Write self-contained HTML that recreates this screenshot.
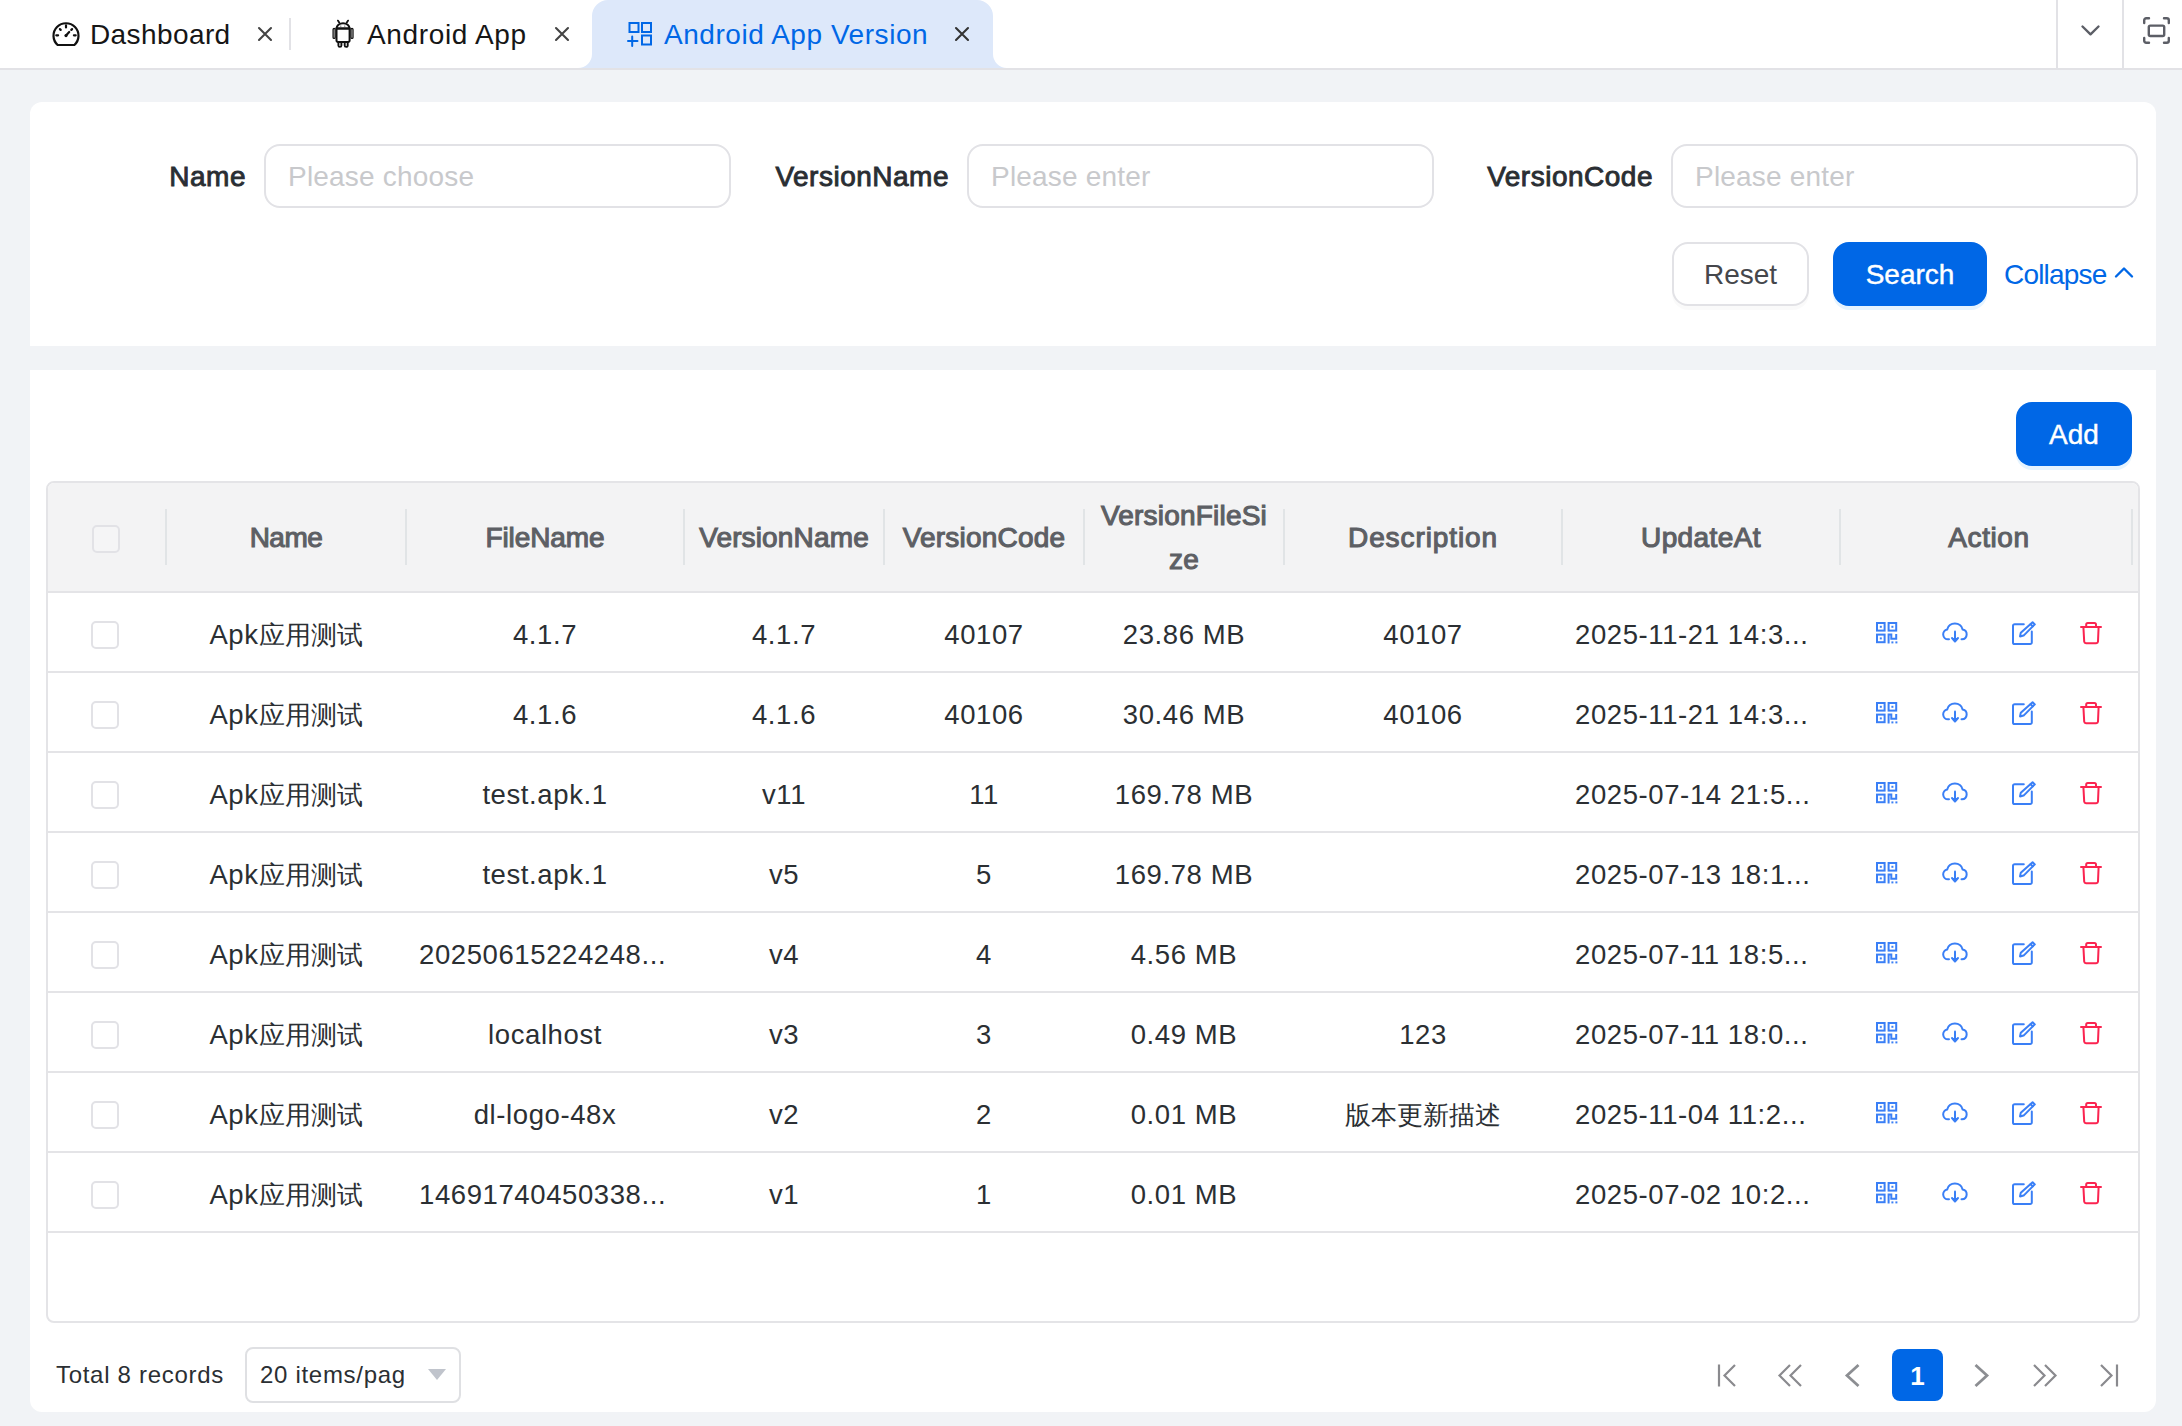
<!DOCTYPE html>
<html><head><meta charset="utf-8">
<style>
*{box-sizing:border-box;margin:0;padding:0}
html,body{width:2182px;height:1426px;overflow:hidden;background:#f1f3f6;font-family:"Liberation Sans",sans-serif;color:#2b2f33}
.t{position:absolute;white-space:nowrap}
.r{position:absolute}
svg{position:absolute;overflow:visible}
.b{font-weight:bold}
</style></head><body>

<div class="r" style="left:0;top:0;width:2182px;height:68px;background:#fff"></div>
<div class="r" style="left:0;top:68px;width:2182px;height:2px;background:#e2e2e6"></div>
<svg style="left:578px;top:0" width="430" height="68" viewBox="0 0 430 68">
<path d="M0 68 A14 14 0 0 0 14 54 L14 16 A16 16 0 0 1 30 0 L399 0 A16 16 0 0 1 415 16 L415 54 A14 14 0 0 0 429 68 Z" fill="#dde8fa"/>
</svg>
<div class="t " style="left:90px;top:21.30px;font-size:28px;line-height:28px;color:#161616;letter-spacing:0.4px">Dashboard</div>
<div class="t " style="left:367px;top:21.30px;font-size:28px;line-height:28px;color:#161616;letter-spacing:0.65px">Android App</div>
<div class="t " style="left:664px;top:21.30px;font-size:28px;line-height:28px;color:#0067e6;letter-spacing:0.55px">Android App Version</div>
<div class="r" style="left:289px;top:18px;width:2px;height:32px;background:#e2e2e6"></div>
<svg style="left:258px;top:27px" width="14" height="14" viewBox="0 0 14 14"><path d="M1 1L13 13M13 1L1 13" stroke="#444" stroke-width="2.1" stroke-linecap="round"/></svg>
<svg style="left:555px;top:27px" width="14" height="14" viewBox="0 0 14 14"><path d="M1 1L13 13M13 1L1 13" stroke="#444" stroke-width="2.1" stroke-linecap="round"/></svg>
<svg style="left:955px;top:27px" width="14" height="14" viewBox="0 0 14 14"><path d="M1 1L13 13M13 1L1 13" stroke="#333" stroke-width="2.1" stroke-linecap="round"/></svg>
<svg style="left:52px;top:21px" width="28" height="26" viewBox="0 0 28 26" fill="none" stroke="#111" stroke-width="2.2" stroke-linecap="round">
<path d="M5.6 24 A12.5 12.5 0 1 1 22.4 24 Z" stroke-linejoin="round"/>
<path d="M14 4.4V6.5M4.3 14.3H6.1M21.9 14.3H23.7M7.9 8.1L8.7 8.9M20.1 8.1L19.3 8.9M14 14.5L17.2 11"/>
<circle cx="14" cy="14.6" r="1.6" fill="#111" stroke="none"/>
</svg>
<svg style="left:332px;top:20px" width="22" height="28" viewBox="0 0 22 28" fill="none" stroke="#111" stroke-width="2">
<path d="M4.5 8.6 A6.5 5.4 0 0 1 17.6 8.6 Z" stroke-linejoin="round"/>
<path d="M5.9 0.6L7.2 2.6M16.1 0.6L14.8 2.6" stroke-linecap="round" stroke-width="1.8"/>
<path d="M4.5 8.6H17.6V20.6A1.4 1.4 0 0 1 16.2 22H5.9A1.4 1.4 0 0 1 4.5 20.6Z"/>
<rect x="1.1" y="8.4" width="2" height="10" rx="1" stroke-width="1.3"/>
<rect x="19" y="8.4" width="2" height="10" rx="1" stroke-width="1.3"/>
<path d="M6.4 22V25.4A1.5 1.5 0 0 0 9.4 25.4V22M12.7 22V25.4A1.5 1.5 0 0 0 15.7 25.4V22" stroke-width="1.9"/>
<circle cx="8.8" cy="6.1" r="0.7" fill="#555" stroke="none"/><circle cx="12.8" cy="6.1" r="0.7" fill="#555" stroke="none"/>
</svg>
<svg style="left:627px;top:22px" width="25" height="25" viewBox="0 0 25 25" fill="none" stroke="#0067e6" stroke-width="2">
<rect x="2.5" y="1" width="9" height="9"/>
<rect x="15" y="1" width="9" height="9"/>
<rect x="15" y="13.5" width="9" height="9"/>
<path d="M1 19.1H10.5M5.2 14.5V24" stroke-linecap="round"/>
</svg>
<div class="r" style="left:2056px;top:0;width:2px;height:68px;background:#e2e2e6"></div>
<div class="r" style="left:2122px;top:0;width:2px;height:68px;background:#e2e2e6"></div>
<svg style="left:2081px;top:25px" width="19" height="11" viewBox="0 0 19 11" fill="none" stroke="#5c5e66" stroke-width="2.4" stroke-linecap="round" stroke-linejoin="round"><path d="M1.5 1.5L9.5 9.3L17.5 1.5"/></svg>
<svg style="left:2143px;top:17px" width="27" height="27" viewBox="0 0 27 27" fill="none" stroke="#5c5e66" stroke-width="2.4" stroke-linecap="round" stroke-linejoin="round">
<path d="M1.2 6V3.2A2 2 0 0 1 3.2 1.2H6M21 1.2H23.8A2 2 0 0 1 25.8 3.2V6M25.8 21V23.8A2 2 0 0 1 23.8 25.8H21M6 25.8H3.2A2 2 0 0 1 1.2 23.8V21"/>
<rect x="5.8" y="8.6" width="15.4" height="10.4" rx="1.5"/>
</svg>
<div class="r" style="left:30px;top:102px;width:2126px;height:244px;background:#fff;border-radius:12px 12px 0 0"></div>
<div class="t " style="left:46px;top:163.30px;font-size:28px;line-height:28px;width:200px;text-align:right;color:#2a2e33;-webkit-text-stroke:0.9px #2a2e33;letter-spacing:0.5px">Name</div>
<div class="t " style="left:749px;top:163.30px;font-size:28px;line-height:28px;width:200px;text-align:right;color:#2a2e33;-webkit-text-stroke:0.9px #2a2e33;letter-spacing:0.5px">VersionName</div>
<div class="t " style="left:1453px;top:163.30px;font-size:28px;line-height:28px;width:200px;text-align:right;color:#2a2e33;-webkit-text-stroke:0.9px #2a2e33;letter-spacing:0.5px">VersionCode</div>
<div class="r" style="left:264px;top:144px;width:467px;height:64px;border:2px solid #e2e2e6;border-radius:16px"></div>
<div class="t " style="left:288px;top:163.30px;font-size:28px;line-height:28px;color:#c8c9cc;letter-spacing:0.2px">Please choose</div>
<div class="r" style="left:967px;top:144px;width:467px;height:64px;border:2px solid #e2e2e6;border-radius:16px"></div>
<div class="t " style="left:991px;top:163.30px;font-size:28px;line-height:28px;color:#c8c9cc;letter-spacing:0.2px">Please enter</div>
<div class="r" style="left:1671px;top:144px;width:467px;height:64px;border:2px solid #e2e2e6;border-radius:16px"></div>
<div class="t " style="left:1695px;top:163.30px;font-size:28px;line-height:28px;color:#c8c9cc;letter-spacing:0.2px">Please enter</div>
<div class="r" style="left:1672px;top:242px;width:137px;height:64px;border:2px solid #e2e2e6;border-radius:16px;background:#fff;box-shadow:0 4px 0 rgba(0,0,0,0.02)"></div>
<div class="t " style="left:1672px;top:261.30px;font-size:28px;line-height:28px;width:137px;text-align:center;color:#45474c">Reset</div>
<div class="r" style="left:1833px;top:242px;width:154px;height:64px;border-radius:16px;background:#0067e6;box-shadow:0 4px 0 rgba(5,145,255,0.1)"></div>
<div class="t " style="left:1833px;top:261.30px;font-size:28px;line-height:28px;width:154px;text-align:center;color:#fff;-webkit-text-stroke:0.4px #fff">Search</div>
<div class="t " style="left:2004px;top:261.30px;font-size:28px;line-height:28px;color:#0067e6;letter-spacing:-0.8px">Collapse</div>
<svg style="left:2114px;top:266px" width="20" height="13" viewBox="0 0 20 13" fill="none" stroke="#0067e6" stroke-width="2.4" stroke-linecap="round" stroke-linejoin="round"><path d="M2 10.5L10 2.5L18 10.5"/></svg>
<div class="r" style="left:30px;top:370px;width:2126px;height:1042px;background:#fff;border-radius:0 0 12px 12px"></div>
<div class="r" style="left:2016px;top:402px;width:116px;height:64px;border-radius:16px;background:#0067e6;box-shadow:0 4px 0 rgba(5,145,255,0.1)"></div>
<div class="t " style="left:2016px;top:421.30px;font-size:28px;line-height:28px;width:116px;text-align:center;color:#fff;-webkit-text-stroke:0.4px #fff">Add</div>
<div class="r" style="left:46px;top:481px;width:2094px;height:842px;border:2px solid #e4e4e7;border-radius:8px;overflow:hidden">
<div class="r" style="left:0;top:0;width:2090px;height:110px;background:#f3f3f4"></div>
</div>
<div class="r" style="left:48px;top:591px;width:2090px;height:2px;background:#e4e4e7"></div>
<div class="r" style="left:48px;top:671px;width:2090px;height:2px;background:#e4e4e7"></div>
<div class="r" style="left:48px;top:751px;width:2090px;height:2px;background:#e4e4e7"></div>
<div class="r" style="left:48px;top:831px;width:2090px;height:2px;background:#e4e4e7"></div>
<div class="r" style="left:48px;top:911px;width:2090px;height:2px;background:#e4e4e7"></div>
<div class="r" style="left:48px;top:991px;width:2090px;height:2px;background:#e4e4e7"></div>
<div class="r" style="left:48px;top:1071px;width:2090px;height:2px;background:#e4e4e7"></div>
<div class="r" style="left:48px;top:1151px;width:2090px;height:2px;background:#e4e4e7"></div>
<div class="r" style="left:48px;top:1231px;width:2090px;height:2px;background:#e4e4e7"></div>
<div class="r" style="left:165px;top:509px;width:2px;height:56px;background:#e1e4e6"></div>
<div class="r" style="left:405px;top:509px;width:2px;height:56px;background:#e1e4e6"></div>
<div class="r" style="left:683px;top:509px;width:2px;height:56px;background:#e1e4e6"></div>
<div class="r" style="left:883px;top:509px;width:2px;height:56px;background:#e1e4e6"></div>
<div class="r" style="left:1083px;top:509px;width:2px;height:56px;background:#e1e4e6"></div>
<div class="r" style="left:1283px;top:509px;width:2px;height:56px;background:#e1e4e6"></div>
<div class="r" style="left:1561px;top:509px;width:2px;height:56px;background:#e1e4e6"></div>
<div class="r" style="left:1839px;top:509px;width:2px;height:56px;background:#e1e4e6"></div>
<div class="r" style="left:2131px;top:509px;width:2px;height:56px;background:#e1e4e6"></div>
<div class="r" style="left:92px;top:525px;width:28px;height:28px;border:2px solid #e2e2e6;border-radius:5px;background:#f5f5f6"></div>
<div class="t " style="left:166px;top:524.30px;font-size:28px;line-height:28px;width:240px;text-align:center;color:#5d5f64;-webkit-text-stroke:1.1px #5d5f64;letter-spacing:-0.5px">Name</div>
<div class="t " style="left:406px;top:524.30px;font-size:28px;line-height:28px;width:278px;text-align:center;color:#5d5f64;-webkit-text-stroke:1.1px #5d5f64;letter-spacing:-0.1px">FileName</div>
<div class="t " style="left:684px;top:524.30px;font-size:28px;line-height:28px;width:200px;text-align:center;color:#5d5f64;-webkit-text-stroke:1.1px #5d5f64;letter-spacing:0.15px">VersionName</div>
<div class="t " style="left:884px;top:524.30px;font-size:28px;line-height:28px;width:200px;text-align:center;color:#5d5f64;-webkit-text-stroke:1.1px #5d5f64;letter-spacing:0.2px">VersionCode</div>
<div class="t " style="left:1284px;top:524.30px;font-size:28px;line-height:28px;width:278px;text-align:center;color:#5d5f64;-webkit-text-stroke:1.1px #5d5f64;letter-spacing:0.9px">Description</div>
<div class="t " style="left:1562px;top:524.30px;font-size:28px;line-height:28px;width:278px;text-align:center;color:#5d5f64;-webkit-text-stroke:1.1px #5d5f64;letter-spacing:0.4px">UpdateAt</div>
<div class="t " style="left:1840px;top:524.30px;font-size:28px;line-height:28px;width:298px;text-align:center;color:#5d5f64;-webkit-text-stroke:1.1px #5d5f64;letter-spacing:0.6px">Action</div>
<div class="t " style="left:1084px;top:502.30px;font-size:28px;line-height:28px;width:200px;text-align:center;color:#5d5f64;-webkit-text-stroke:1.1px #5d5f64;letter-spacing:0.2px">VersionFileSi</div>
<div class="t " style="left:1084px;top:546.30px;font-size:28px;line-height:28px;width:200px;text-align:center;color:#5d5f64;-webkit-text-stroke:1.1px #5d5f64;letter-spacing:0.1px">ze</div>
<div class="r" style="left:91px;top:621px;width:28px;height:28px;border:2px solid #e2e2e6;border-radius:5px;background:#fff"></div>
<div class="t " style="left:166px;top:620.72px;font-size:27.5px;line-height:27.5px;width:240px;text-align:center;color:#2b2f33;letter-spacing:0.6px">Apk<span style="font-size:25.5px;letter-spacing:0">应用测试</span></div>
<div class="t " style="left:406px;top:620.72px;font-size:27.5px;line-height:27.5px;width:278px;text-align:center;color:#2b2f33;letter-spacing:0.6px">4.1.7</div>
<div class="t " style="left:684px;top:620.72px;font-size:27.5px;line-height:27.5px;width:200px;text-align:center;color:#2b2f33;letter-spacing:0.6px">4.1.7</div>
<div class="t " style="left:884px;top:620.72px;font-size:27.5px;line-height:27.5px;width:200px;text-align:center;color:#2b2f33;letter-spacing:0.6px">40107</div>
<div class="t " style="left:1084px;top:620.72px;font-size:27.5px;line-height:27.5px;width:200px;text-align:center;color:#2b2f33;letter-spacing:0.6px">23.86 MB</div>
<div class="t " style="left:1284px;top:620.72px;font-size:27.5px;line-height:27.5px;width:278px;text-align:center;color:#2b2f33;letter-spacing:0.6px">40107</div>
<div class="t " style="left:1575px;top:620.72px;font-size:27.5px;line-height:27.5px;color:#2b2f33;letter-spacing:0.6px">2025-11-21 14:3...</div>
<svg style="left:1876px;top:622px" width="22" height="22" viewBox="0 0 22 22" fill="none" stroke="#3a7ff6" stroke-width="2">
<rect x="1" y="1" width="7.6" height="7.6"/><rect x="12.6" y="1" width="7.6" height="7.6"/><rect x="1" y="12.6" width="7.6" height="7.6"/>
<path d="M12.6 21.4V12.6H15.3V16.8H20.2V12"/>
</svg>
<svg style="left:1876px;top:622px" width="22" height="22" viewBox="0 0 22 22" fill="#3a7ff6"><rect x="3.8" y="3.8" width="2" height="2"/><rect x="15.4" y="3.8" width="2" height="2"/><rect x="3.8" y="15.4" width="2" height="2"/><rect x="15.4" y="19.4" width="2" height="2"/><rect x="19.4" y="19.4" width="2" height="2"/></svg>
<svg style="left:1942px;top:623px" width="26" height="20" viewBox="0 0 26 20" fill="none" stroke="#3a7ff6" stroke-width="2" stroke-linecap="round">
<path d="M7 16.3H6A5 5 0 0 1 5.2 6.4A8 8 0 0 1 20.6 6.4A5 5 0 0 1 20 16.3H19.5"/>
<path d="M13 8.5V17.5"/><path d="M10 15L13 18.5L16 15" fill="#3a7ff6" stroke-linejoin="round"/>
</svg>
<svg style="left:2012px;top:621px" width="24" height="24" viewBox="0 0 24 24" fill="none" stroke="#3a7ff6" stroke-width="2" stroke-linecap="round" stroke-linejoin="round">
<path d="M11.8 3.2H2.6A1.6 1.6 0 0 0 1 4.8V21.4A1.6 1.6 0 0 0 2.6 23H18.2A1.6 1.6 0 0 0 19.8 21.4V10.6"/>
<path d="M20.6 1.2L22.8 3.4L11.6 14.6L8 15.4L8.8 11.8Z"/><path d="M18.6 3.2L20.8 5.4"/>
</svg>
<svg style="left:2080px;top:622px" width="22" height="22" viewBox="0 0 22 22" fill="none" stroke="#fb2450" stroke-width="2" stroke-linecap="round" stroke-linejoin="round">
<path d="M1 5H21"/><path d="M6.2 5V2.6A1.6 1.6 0 0 1 7.8 1H14.4A1.6 1.6 0 0 1 16 2.6V5"/>
<path d="M3.4 5L4.2 19.6A1.8 1.8 0 0 0 6 21.2H16.2A1.8 1.8 0 0 0 18 19.6L18.6 5"/>
</svg>
<div class="r" style="left:91px;top:701px;width:28px;height:28px;border:2px solid #e2e2e6;border-radius:5px;background:#fff"></div>
<div class="t " style="left:166px;top:700.72px;font-size:27.5px;line-height:27.5px;width:240px;text-align:center;color:#2b2f33;letter-spacing:0.6px">Apk<span style="font-size:25.5px;letter-spacing:0">应用测试</span></div>
<div class="t " style="left:406px;top:700.72px;font-size:27.5px;line-height:27.5px;width:278px;text-align:center;color:#2b2f33;letter-spacing:0.6px">4.1.6</div>
<div class="t " style="left:684px;top:700.72px;font-size:27.5px;line-height:27.5px;width:200px;text-align:center;color:#2b2f33;letter-spacing:0.6px">4.1.6</div>
<div class="t " style="left:884px;top:700.72px;font-size:27.5px;line-height:27.5px;width:200px;text-align:center;color:#2b2f33;letter-spacing:0.6px">40106</div>
<div class="t " style="left:1084px;top:700.72px;font-size:27.5px;line-height:27.5px;width:200px;text-align:center;color:#2b2f33;letter-spacing:0.6px">30.46 MB</div>
<div class="t " style="left:1284px;top:700.72px;font-size:27.5px;line-height:27.5px;width:278px;text-align:center;color:#2b2f33;letter-spacing:0.6px">40106</div>
<div class="t " style="left:1575px;top:700.72px;font-size:27.5px;line-height:27.5px;color:#2b2f33;letter-spacing:0.6px">2025-11-21 14:3...</div>
<svg style="left:1876px;top:702px" width="22" height="22" viewBox="0 0 22 22" fill="none" stroke="#3a7ff6" stroke-width="2">
<rect x="1" y="1" width="7.6" height="7.6"/><rect x="12.6" y="1" width="7.6" height="7.6"/><rect x="1" y="12.6" width="7.6" height="7.6"/>
<path d="M12.6 21.4V12.6H15.3V16.8H20.2V12"/>
</svg>
<svg style="left:1876px;top:702px" width="22" height="22" viewBox="0 0 22 22" fill="#3a7ff6"><rect x="3.8" y="3.8" width="2" height="2"/><rect x="15.4" y="3.8" width="2" height="2"/><rect x="3.8" y="15.4" width="2" height="2"/><rect x="15.4" y="19.4" width="2" height="2"/><rect x="19.4" y="19.4" width="2" height="2"/></svg>
<svg style="left:1942px;top:703px" width="26" height="20" viewBox="0 0 26 20" fill="none" stroke="#3a7ff6" stroke-width="2" stroke-linecap="round">
<path d="M7 16.3H6A5 5 0 0 1 5.2 6.4A8 8 0 0 1 20.6 6.4A5 5 0 0 1 20 16.3H19.5"/>
<path d="M13 8.5V17.5"/><path d="M10 15L13 18.5L16 15" fill="#3a7ff6" stroke-linejoin="round"/>
</svg>
<svg style="left:2012px;top:701px" width="24" height="24" viewBox="0 0 24 24" fill="none" stroke="#3a7ff6" stroke-width="2" stroke-linecap="round" stroke-linejoin="round">
<path d="M11.8 3.2H2.6A1.6 1.6 0 0 0 1 4.8V21.4A1.6 1.6 0 0 0 2.6 23H18.2A1.6 1.6 0 0 0 19.8 21.4V10.6"/>
<path d="M20.6 1.2L22.8 3.4L11.6 14.6L8 15.4L8.8 11.8Z"/><path d="M18.6 3.2L20.8 5.4"/>
</svg>
<svg style="left:2080px;top:702px" width="22" height="22" viewBox="0 0 22 22" fill="none" stroke="#fb2450" stroke-width="2" stroke-linecap="round" stroke-linejoin="round">
<path d="M1 5H21"/><path d="M6.2 5V2.6A1.6 1.6 0 0 1 7.8 1H14.4A1.6 1.6 0 0 1 16 2.6V5"/>
<path d="M3.4 5L4.2 19.6A1.8 1.8 0 0 0 6 21.2H16.2A1.8 1.8 0 0 0 18 19.6L18.6 5"/>
</svg>
<div class="r" style="left:91px;top:781px;width:28px;height:28px;border:2px solid #e2e2e6;border-radius:5px;background:#fff"></div>
<div class="t " style="left:166px;top:780.72px;font-size:27.5px;line-height:27.5px;width:240px;text-align:center;color:#2b2f33;letter-spacing:0.6px">Apk<span style="font-size:25.5px;letter-spacing:0">应用测试</span></div>
<div class="t " style="left:406px;top:780.72px;font-size:27.5px;line-height:27.5px;width:278px;text-align:center;color:#2b2f33;letter-spacing:0.6px">test.apk.1</div>
<div class="t " style="left:684px;top:780.72px;font-size:27.5px;line-height:27.5px;width:200px;text-align:center;color:#2b2f33;letter-spacing:0.6px">v11</div>
<div class="t " style="left:884px;top:780.72px;font-size:27.5px;line-height:27.5px;width:200px;text-align:center;color:#2b2f33;letter-spacing:0.6px">11</div>
<div class="t " style="left:1084px;top:780.72px;font-size:27.5px;line-height:27.5px;width:200px;text-align:center;color:#2b2f33;letter-spacing:0.6px">169.78 MB</div>
<div class="t " style="left:1575px;top:780.72px;font-size:27.5px;line-height:27.5px;color:#2b2f33;letter-spacing:0.6px">2025-07-14 21:5...</div>
<svg style="left:1876px;top:782px" width="22" height="22" viewBox="0 0 22 22" fill="none" stroke="#3a7ff6" stroke-width="2">
<rect x="1" y="1" width="7.6" height="7.6"/><rect x="12.6" y="1" width="7.6" height="7.6"/><rect x="1" y="12.6" width="7.6" height="7.6"/>
<path d="M12.6 21.4V12.6H15.3V16.8H20.2V12"/>
</svg>
<svg style="left:1876px;top:782px" width="22" height="22" viewBox="0 0 22 22" fill="#3a7ff6"><rect x="3.8" y="3.8" width="2" height="2"/><rect x="15.4" y="3.8" width="2" height="2"/><rect x="3.8" y="15.4" width="2" height="2"/><rect x="15.4" y="19.4" width="2" height="2"/><rect x="19.4" y="19.4" width="2" height="2"/></svg>
<svg style="left:1942px;top:783px" width="26" height="20" viewBox="0 0 26 20" fill="none" stroke="#3a7ff6" stroke-width="2" stroke-linecap="round">
<path d="M7 16.3H6A5 5 0 0 1 5.2 6.4A8 8 0 0 1 20.6 6.4A5 5 0 0 1 20 16.3H19.5"/>
<path d="M13 8.5V17.5"/><path d="M10 15L13 18.5L16 15" fill="#3a7ff6" stroke-linejoin="round"/>
</svg>
<svg style="left:2012px;top:781px" width="24" height="24" viewBox="0 0 24 24" fill="none" stroke="#3a7ff6" stroke-width="2" stroke-linecap="round" stroke-linejoin="round">
<path d="M11.8 3.2H2.6A1.6 1.6 0 0 0 1 4.8V21.4A1.6 1.6 0 0 0 2.6 23H18.2A1.6 1.6 0 0 0 19.8 21.4V10.6"/>
<path d="M20.6 1.2L22.8 3.4L11.6 14.6L8 15.4L8.8 11.8Z"/><path d="M18.6 3.2L20.8 5.4"/>
</svg>
<svg style="left:2080px;top:782px" width="22" height="22" viewBox="0 0 22 22" fill="none" stroke="#fb2450" stroke-width="2" stroke-linecap="round" stroke-linejoin="round">
<path d="M1 5H21"/><path d="M6.2 5V2.6A1.6 1.6 0 0 1 7.8 1H14.4A1.6 1.6 0 0 1 16 2.6V5"/>
<path d="M3.4 5L4.2 19.6A1.8 1.8 0 0 0 6 21.2H16.2A1.8 1.8 0 0 0 18 19.6L18.6 5"/>
</svg>
<div class="r" style="left:91px;top:861px;width:28px;height:28px;border:2px solid #e2e2e6;border-radius:5px;background:#fff"></div>
<div class="t " style="left:166px;top:860.72px;font-size:27.5px;line-height:27.5px;width:240px;text-align:center;color:#2b2f33;letter-spacing:0.6px">Apk<span style="font-size:25.5px;letter-spacing:0">应用测试</span></div>
<div class="t " style="left:406px;top:860.72px;font-size:27.5px;line-height:27.5px;width:278px;text-align:center;color:#2b2f33;letter-spacing:0.6px">test.apk.1</div>
<div class="t " style="left:684px;top:860.72px;font-size:27.5px;line-height:27.5px;width:200px;text-align:center;color:#2b2f33;letter-spacing:0.6px">v5</div>
<div class="t " style="left:884px;top:860.72px;font-size:27.5px;line-height:27.5px;width:200px;text-align:center;color:#2b2f33;letter-spacing:0.6px">5</div>
<div class="t " style="left:1084px;top:860.72px;font-size:27.5px;line-height:27.5px;width:200px;text-align:center;color:#2b2f33;letter-spacing:0.6px">169.78 MB</div>
<div class="t " style="left:1575px;top:860.72px;font-size:27.5px;line-height:27.5px;color:#2b2f33;letter-spacing:0.6px">2025-07-13 18:1...</div>
<svg style="left:1876px;top:862px" width="22" height="22" viewBox="0 0 22 22" fill="none" stroke="#3a7ff6" stroke-width="2">
<rect x="1" y="1" width="7.6" height="7.6"/><rect x="12.6" y="1" width="7.6" height="7.6"/><rect x="1" y="12.6" width="7.6" height="7.6"/>
<path d="M12.6 21.4V12.6H15.3V16.8H20.2V12"/>
</svg>
<svg style="left:1876px;top:862px" width="22" height="22" viewBox="0 0 22 22" fill="#3a7ff6"><rect x="3.8" y="3.8" width="2" height="2"/><rect x="15.4" y="3.8" width="2" height="2"/><rect x="3.8" y="15.4" width="2" height="2"/><rect x="15.4" y="19.4" width="2" height="2"/><rect x="19.4" y="19.4" width="2" height="2"/></svg>
<svg style="left:1942px;top:863px" width="26" height="20" viewBox="0 0 26 20" fill="none" stroke="#3a7ff6" stroke-width="2" stroke-linecap="round">
<path d="M7 16.3H6A5 5 0 0 1 5.2 6.4A8 8 0 0 1 20.6 6.4A5 5 0 0 1 20 16.3H19.5"/>
<path d="M13 8.5V17.5"/><path d="M10 15L13 18.5L16 15" fill="#3a7ff6" stroke-linejoin="round"/>
</svg>
<svg style="left:2012px;top:861px" width="24" height="24" viewBox="0 0 24 24" fill="none" stroke="#3a7ff6" stroke-width="2" stroke-linecap="round" stroke-linejoin="round">
<path d="M11.8 3.2H2.6A1.6 1.6 0 0 0 1 4.8V21.4A1.6 1.6 0 0 0 2.6 23H18.2A1.6 1.6 0 0 0 19.8 21.4V10.6"/>
<path d="M20.6 1.2L22.8 3.4L11.6 14.6L8 15.4L8.8 11.8Z"/><path d="M18.6 3.2L20.8 5.4"/>
</svg>
<svg style="left:2080px;top:862px" width="22" height="22" viewBox="0 0 22 22" fill="none" stroke="#fb2450" stroke-width="2" stroke-linecap="round" stroke-linejoin="round">
<path d="M1 5H21"/><path d="M6.2 5V2.6A1.6 1.6 0 0 1 7.8 1H14.4A1.6 1.6 0 0 1 16 2.6V5"/>
<path d="M3.4 5L4.2 19.6A1.8 1.8 0 0 0 6 21.2H16.2A1.8 1.8 0 0 0 18 19.6L18.6 5"/>
</svg>
<div class="r" style="left:91px;top:941px;width:28px;height:28px;border:2px solid #e2e2e6;border-radius:5px;background:#fff"></div>
<div class="t " style="left:166px;top:940.72px;font-size:27.5px;line-height:27.5px;width:240px;text-align:center;color:#2b2f33;letter-spacing:0.6px">Apk<span style="font-size:25.5px;letter-spacing:0">应用测试</span></div>
<div class="t " style="left:419px;top:940.72px;font-size:27.5px;line-height:27.5px;color:#2b2f33;letter-spacing:0.6px">20250615224248...</div>
<div class="t " style="left:684px;top:940.72px;font-size:27.5px;line-height:27.5px;width:200px;text-align:center;color:#2b2f33;letter-spacing:0.6px">v4</div>
<div class="t " style="left:884px;top:940.72px;font-size:27.5px;line-height:27.5px;width:200px;text-align:center;color:#2b2f33;letter-spacing:0.6px">4</div>
<div class="t " style="left:1084px;top:940.72px;font-size:27.5px;line-height:27.5px;width:200px;text-align:center;color:#2b2f33;letter-spacing:0.6px">4.56 MB</div>
<div class="t " style="left:1575px;top:940.72px;font-size:27.5px;line-height:27.5px;color:#2b2f33;letter-spacing:0.6px">2025-07-11 18:5...</div>
<svg style="left:1876px;top:942px" width="22" height="22" viewBox="0 0 22 22" fill="none" stroke="#3a7ff6" stroke-width="2">
<rect x="1" y="1" width="7.6" height="7.6"/><rect x="12.6" y="1" width="7.6" height="7.6"/><rect x="1" y="12.6" width="7.6" height="7.6"/>
<path d="M12.6 21.4V12.6H15.3V16.8H20.2V12"/>
</svg>
<svg style="left:1876px;top:942px" width="22" height="22" viewBox="0 0 22 22" fill="#3a7ff6"><rect x="3.8" y="3.8" width="2" height="2"/><rect x="15.4" y="3.8" width="2" height="2"/><rect x="3.8" y="15.4" width="2" height="2"/><rect x="15.4" y="19.4" width="2" height="2"/><rect x="19.4" y="19.4" width="2" height="2"/></svg>
<svg style="left:1942px;top:943px" width="26" height="20" viewBox="0 0 26 20" fill="none" stroke="#3a7ff6" stroke-width="2" stroke-linecap="round">
<path d="M7 16.3H6A5 5 0 0 1 5.2 6.4A8 8 0 0 1 20.6 6.4A5 5 0 0 1 20 16.3H19.5"/>
<path d="M13 8.5V17.5"/><path d="M10 15L13 18.5L16 15" fill="#3a7ff6" stroke-linejoin="round"/>
</svg>
<svg style="left:2012px;top:941px" width="24" height="24" viewBox="0 0 24 24" fill="none" stroke="#3a7ff6" stroke-width="2" stroke-linecap="round" stroke-linejoin="round">
<path d="M11.8 3.2H2.6A1.6 1.6 0 0 0 1 4.8V21.4A1.6 1.6 0 0 0 2.6 23H18.2A1.6 1.6 0 0 0 19.8 21.4V10.6"/>
<path d="M20.6 1.2L22.8 3.4L11.6 14.6L8 15.4L8.8 11.8Z"/><path d="M18.6 3.2L20.8 5.4"/>
</svg>
<svg style="left:2080px;top:942px" width="22" height="22" viewBox="0 0 22 22" fill="none" stroke="#fb2450" stroke-width="2" stroke-linecap="round" stroke-linejoin="round">
<path d="M1 5H21"/><path d="M6.2 5V2.6A1.6 1.6 0 0 1 7.8 1H14.4A1.6 1.6 0 0 1 16 2.6V5"/>
<path d="M3.4 5L4.2 19.6A1.8 1.8 0 0 0 6 21.2H16.2A1.8 1.8 0 0 0 18 19.6L18.6 5"/>
</svg>
<div class="r" style="left:91px;top:1021px;width:28px;height:28px;border:2px solid #e2e2e6;border-radius:5px;background:#fff"></div>
<div class="t " style="left:166px;top:1020.72px;font-size:27.5px;line-height:27.5px;width:240px;text-align:center;color:#2b2f33;letter-spacing:0.6px">Apk<span style="font-size:25.5px;letter-spacing:0">应用测试</span></div>
<div class="t " style="left:406px;top:1020.72px;font-size:27.5px;line-height:27.5px;width:278px;text-align:center;color:#2b2f33;letter-spacing:0.6px">localhost</div>
<div class="t " style="left:684px;top:1020.72px;font-size:27.5px;line-height:27.5px;width:200px;text-align:center;color:#2b2f33;letter-spacing:0.6px">v3</div>
<div class="t " style="left:884px;top:1020.72px;font-size:27.5px;line-height:27.5px;width:200px;text-align:center;color:#2b2f33;letter-spacing:0.6px">3</div>
<div class="t " style="left:1084px;top:1020.72px;font-size:27.5px;line-height:27.5px;width:200px;text-align:center;color:#2b2f33;letter-spacing:0.6px">0.49 MB</div>
<div class="t " style="left:1284px;top:1020.72px;font-size:27.5px;line-height:27.5px;width:278px;text-align:center;color:#2b2f33;letter-spacing:0.6px">123</div>
<div class="t " style="left:1575px;top:1020.72px;font-size:27.5px;line-height:27.5px;color:#2b2f33;letter-spacing:0.6px">2025-07-11 18:0...</div>
<svg style="left:1876px;top:1022px" width="22" height="22" viewBox="0 0 22 22" fill="none" stroke="#3a7ff6" stroke-width="2">
<rect x="1" y="1" width="7.6" height="7.6"/><rect x="12.6" y="1" width="7.6" height="7.6"/><rect x="1" y="12.6" width="7.6" height="7.6"/>
<path d="M12.6 21.4V12.6H15.3V16.8H20.2V12"/>
</svg>
<svg style="left:1876px;top:1022px" width="22" height="22" viewBox="0 0 22 22" fill="#3a7ff6"><rect x="3.8" y="3.8" width="2" height="2"/><rect x="15.4" y="3.8" width="2" height="2"/><rect x="3.8" y="15.4" width="2" height="2"/><rect x="15.4" y="19.4" width="2" height="2"/><rect x="19.4" y="19.4" width="2" height="2"/></svg>
<svg style="left:1942px;top:1023px" width="26" height="20" viewBox="0 0 26 20" fill="none" stroke="#3a7ff6" stroke-width="2" stroke-linecap="round">
<path d="M7 16.3H6A5 5 0 0 1 5.2 6.4A8 8 0 0 1 20.6 6.4A5 5 0 0 1 20 16.3H19.5"/>
<path d="M13 8.5V17.5"/><path d="M10 15L13 18.5L16 15" fill="#3a7ff6" stroke-linejoin="round"/>
</svg>
<svg style="left:2012px;top:1021px" width="24" height="24" viewBox="0 0 24 24" fill="none" stroke="#3a7ff6" stroke-width="2" stroke-linecap="round" stroke-linejoin="round">
<path d="M11.8 3.2H2.6A1.6 1.6 0 0 0 1 4.8V21.4A1.6 1.6 0 0 0 2.6 23H18.2A1.6 1.6 0 0 0 19.8 21.4V10.6"/>
<path d="M20.6 1.2L22.8 3.4L11.6 14.6L8 15.4L8.8 11.8Z"/><path d="M18.6 3.2L20.8 5.4"/>
</svg>
<svg style="left:2080px;top:1022px" width="22" height="22" viewBox="0 0 22 22" fill="none" stroke="#fb2450" stroke-width="2" stroke-linecap="round" stroke-linejoin="round">
<path d="M1 5H21"/><path d="M6.2 5V2.6A1.6 1.6 0 0 1 7.8 1H14.4A1.6 1.6 0 0 1 16 2.6V5"/>
<path d="M3.4 5L4.2 19.6A1.8 1.8 0 0 0 6 21.2H16.2A1.8 1.8 0 0 0 18 19.6L18.6 5"/>
</svg>
<div class="r" style="left:91px;top:1101px;width:28px;height:28px;border:2px solid #e2e2e6;border-radius:5px;background:#fff"></div>
<div class="t " style="left:166px;top:1100.72px;font-size:27.5px;line-height:27.5px;width:240px;text-align:center;color:#2b2f33;letter-spacing:0.6px">Apk<span style="font-size:25.5px;letter-spacing:0">应用测试</span></div>
<div class="t " style="left:406px;top:1100.72px;font-size:27.5px;line-height:27.5px;width:278px;text-align:center;color:#2b2f33;letter-spacing:0.6px">dl-logo-48x</div>
<div class="t " style="left:684px;top:1100.72px;font-size:27.5px;line-height:27.5px;width:200px;text-align:center;color:#2b2f33;letter-spacing:0.6px">v2</div>
<div class="t " style="left:884px;top:1100.72px;font-size:27.5px;line-height:27.5px;width:200px;text-align:center;color:#2b2f33;letter-spacing:0.6px">2</div>
<div class="t " style="left:1084px;top:1100.72px;font-size:27.5px;line-height:27.5px;width:200px;text-align:center;color:#2b2f33;letter-spacing:0.6px">0.01 MB</div>
<div class="t " style="left:1284px;top:1100.72px;font-size:27.5px;line-height:27.5px;width:278px;text-align:center;color:#2b2f33;letter-spacing:0.6px"><span style="font-size:25.5px;letter-spacing:0">版本更新描述</span></div>
<div class="t " style="left:1575px;top:1100.72px;font-size:27.5px;line-height:27.5px;color:#2b2f33;letter-spacing:0.6px">2025-11-04 11:2...</div>
<svg style="left:1876px;top:1102px" width="22" height="22" viewBox="0 0 22 22" fill="none" stroke="#3a7ff6" stroke-width="2">
<rect x="1" y="1" width="7.6" height="7.6"/><rect x="12.6" y="1" width="7.6" height="7.6"/><rect x="1" y="12.6" width="7.6" height="7.6"/>
<path d="M12.6 21.4V12.6H15.3V16.8H20.2V12"/>
</svg>
<svg style="left:1876px;top:1102px" width="22" height="22" viewBox="0 0 22 22" fill="#3a7ff6"><rect x="3.8" y="3.8" width="2" height="2"/><rect x="15.4" y="3.8" width="2" height="2"/><rect x="3.8" y="15.4" width="2" height="2"/><rect x="15.4" y="19.4" width="2" height="2"/><rect x="19.4" y="19.4" width="2" height="2"/></svg>
<svg style="left:1942px;top:1103px" width="26" height="20" viewBox="0 0 26 20" fill="none" stroke="#3a7ff6" stroke-width="2" stroke-linecap="round">
<path d="M7 16.3H6A5 5 0 0 1 5.2 6.4A8 8 0 0 1 20.6 6.4A5 5 0 0 1 20 16.3H19.5"/>
<path d="M13 8.5V17.5"/><path d="M10 15L13 18.5L16 15" fill="#3a7ff6" stroke-linejoin="round"/>
</svg>
<svg style="left:2012px;top:1101px" width="24" height="24" viewBox="0 0 24 24" fill="none" stroke="#3a7ff6" stroke-width="2" stroke-linecap="round" stroke-linejoin="round">
<path d="M11.8 3.2H2.6A1.6 1.6 0 0 0 1 4.8V21.4A1.6 1.6 0 0 0 2.6 23H18.2A1.6 1.6 0 0 0 19.8 21.4V10.6"/>
<path d="M20.6 1.2L22.8 3.4L11.6 14.6L8 15.4L8.8 11.8Z"/><path d="M18.6 3.2L20.8 5.4"/>
</svg>
<svg style="left:2080px;top:1102px" width="22" height="22" viewBox="0 0 22 22" fill="none" stroke="#fb2450" stroke-width="2" stroke-linecap="round" stroke-linejoin="round">
<path d="M1 5H21"/><path d="M6.2 5V2.6A1.6 1.6 0 0 1 7.8 1H14.4A1.6 1.6 0 0 1 16 2.6V5"/>
<path d="M3.4 5L4.2 19.6A1.8 1.8 0 0 0 6 21.2H16.2A1.8 1.8 0 0 0 18 19.6L18.6 5"/>
</svg>
<div class="r" style="left:91px;top:1181px;width:28px;height:28px;border:2px solid #e2e2e6;border-radius:5px;background:#fff"></div>
<div class="t " style="left:166px;top:1180.72px;font-size:27.5px;line-height:27.5px;width:240px;text-align:center;color:#2b2f33;letter-spacing:0.6px">Apk<span style="font-size:25.5px;letter-spacing:0">应用测试</span></div>
<div class="t " style="left:419px;top:1180.72px;font-size:27.5px;line-height:27.5px;color:#2b2f33;letter-spacing:0.6px">14691740450338...</div>
<div class="t " style="left:684px;top:1180.72px;font-size:27.5px;line-height:27.5px;width:200px;text-align:center;color:#2b2f33;letter-spacing:0.6px">v1</div>
<div class="t " style="left:884px;top:1180.72px;font-size:27.5px;line-height:27.5px;width:200px;text-align:center;color:#2b2f33;letter-spacing:0.6px">1</div>
<div class="t " style="left:1084px;top:1180.72px;font-size:27.5px;line-height:27.5px;width:200px;text-align:center;color:#2b2f33;letter-spacing:0.6px">0.01 MB</div>
<div class="t " style="left:1575px;top:1180.72px;font-size:27.5px;line-height:27.5px;color:#2b2f33;letter-spacing:0.6px">2025-07-02 10:2...</div>
<svg style="left:1876px;top:1182px" width="22" height="22" viewBox="0 0 22 22" fill="none" stroke="#3a7ff6" stroke-width="2">
<rect x="1" y="1" width="7.6" height="7.6"/><rect x="12.6" y="1" width="7.6" height="7.6"/><rect x="1" y="12.6" width="7.6" height="7.6"/>
<path d="M12.6 21.4V12.6H15.3V16.8H20.2V12"/>
</svg>
<svg style="left:1876px;top:1182px" width="22" height="22" viewBox="0 0 22 22" fill="#3a7ff6"><rect x="3.8" y="3.8" width="2" height="2"/><rect x="15.4" y="3.8" width="2" height="2"/><rect x="3.8" y="15.4" width="2" height="2"/><rect x="15.4" y="19.4" width="2" height="2"/><rect x="19.4" y="19.4" width="2" height="2"/></svg>
<svg style="left:1942px;top:1183px" width="26" height="20" viewBox="0 0 26 20" fill="none" stroke="#3a7ff6" stroke-width="2" stroke-linecap="round">
<path d="M7 16.3H6A5 5 0 0 1 5.2 6.4A8 8 0 0 1 20.6 6.4A5 5 0 0 1 20 16.3H19.5"/>
<path d="M13 8.5V17.5"/><path d="M10 15L13 18.5L16 15" fill="#3a7ff6" stroke-linejoin="round"/>
</svg>
<svg style="left:2012px;top:1181px" width="24" height="24" viewBox="0 0 24 24" fill="none" stroke="#3a7ff6" stroke-width="2" stroke-linecap="round" stroke-linejoin="round">
<path d="M11.8 3.2H2.6A1.6 1.6 0 0 0 1 4.8V21.4A1.6 1.6 0 0 0 2.6 23H18.2A1.6 1.6 0 0 0 19.8 21.4V10.6"/>
<path d="M20.6 1.2L22.8 3.4L11.6 14.6L8 15.4L8.8 11.8Z"/><path d="M18.6 3.2L20.8 5.4"/>
</svg>
<svg style="left:2080px;top:1182px" width="22" height="22" viewBox="0 0 22 22" fill="none" stroke="#fb2450" stroke-width="2" stroke-linecap="round" stroke-linejoin="round">
<path d="M1 5H21"/><path d="M6.2 5V2.6A1.6 1.6 0 0 1 7.8 1H14.4A1.6 1.6 0 0 1 16 2.6V5"/>
<path d="M3.4 5L4.2 19.6A1.8 1.8 0 0 0 6 21.2H16.2A1.8 1.8 0 0 0 18 19.6L18.6 5"/>
</svg>
<div class="t " style="left:56px;top:1362.68px;font-size:24px;line-height:24px;color:#2b2f33;letter-spacing:0.7px">Total 8 records</div>
<div class="r" style="left:245px;top:1347px;width:216px;height:56px;border:2px solid #dfe0e3;border-radius:8px"></div>
<div class="r" style="left:247px;top:1349px;width:157px;height:52px;overflow:hidden">
<div class="t " style="left:13px;top:14.18px;font-size:24px;line-height:24px;color:#2b2f33;letter-spacing:0.7px">20 items/page</div>
</div>
<svg style="left:428px;top:1369px" width="18" height="11" viewBox="0 0 18 11"><path d="M0 0H18L9 11Z" fill="#c0c4cc"/></svg>
<svg style="left:1717px;top:1364px" width="20" height="23" viewBox="0 0 20 23" fill="none" stroke="#8a8a8e" stroke-width="2.2" stroke-linecap="butt"><path d="M2 0.5V22.5M18 1L7.5 11.5L18 22"/></svg>
<svg style="left:1778px;top:1364px" width="25" height="23" viewBox="0 0 25 23" fill="none" stroke="#8a8a8e" stroke-width="2.2" stroke-linecap="butt"><path d="M12 1L1.5 11.5L12 22M23 1L12.5 11.5L23 22"/></svg>
<svg style="left:1845px;top:1364px" width="15" height="23" viewBox="0 0 15 23" fill="none" stroke="#8c8e92" stroke-width="2.8"><path d="M13.5 1L2 11.5L13.5 22"/></svg>
<div class="r" style="left:1892px;top:1349px;width:51px;height:52px;border-radius:8px;background:#0067e6"></div>
<div class="t " style="left:1892px;top:1362.99px;font-size:26px;line-height:26px;width:51px;text-align:center;color:#fff;font-weight:bold">1</div>
<svg style="left:1974px;top:1364px" width="15" height="23" viewBox="0 0 15 23" fill="none" stroke="#8c8e92" stroke-width="2.8"><path d="M1.5 1L13 11.5L1.5 22"/></svg>
<svg style="left:2032px;top:1364px" width="25" height="23" viewBox="0 0 25 23" fill="none" stroke="#8a8a8e" stroke-width="2.2" stroke-linecap="butt"><path d="M2 1L12.5 11.5L2 22M13 1L23.5 11.5L13 22"/></svg>
<svg style="left:2099px;top:1364px" width="20" height="23" viewBox="0 0 20 23" fill="none" stroke="#8a8a8e" stroke-width="2.2" stroke-linecap="butt"><path d="M2 1L12.5 11.5L2 22M18 0.5V22.5"/></svg>
</body></html>
